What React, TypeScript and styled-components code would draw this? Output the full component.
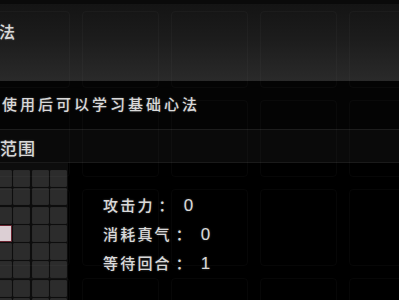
import React from "react";
import styled, { createGlobalStyle } from "styled-components";

const Global = createGlobalStyle`
  html, body { margin: 0; padding: 0; background: #000; }
  #root { width: 399px; height: 300px; }
`;

const Screen = styled.div`
  position: relative;
  width: 399px;
  height: 300px;
  overflow: hidden;
  background: #000;
  font-family: "Noto Sans CJK SC", "Noto Sans", sans-serif;
  color: #d9d9d9;
`;

const SlotLayer = styled.div`
  position: absolute;
  left: -7px;
  top: 11px;
  display: grid;
  grid-template-columns: repeat(5, 77px);
  grid-auto-rows: 77px;
  column-gap: 12px;
  row-gap: 12px;
  pointer-events: none;
  z-index: 2;
`;

const Slot = styled.div`
  border: 1px solid rgba(255, 255, 255, 0.028);
  border-radius: 4px;
  box-sizing: border-box;
`;

const Content = styled.div`
  position: relative;
  z-index: 1;
  display: flex;
  flex-direction: column;
`;

const TitleBar = styled.div`
  height: 81px;
  box-sizing: border-box;
  border-top: 4px solid #0a0a0a;
  background: linear-gradient(180deg, #141414 0%, #1c1c1c 45%, #2a2a2a 100%);
  display: flex;
  align-items: flex-start;
  padding-top: 16px;
`;

const Glow = styled.span`
  font-weight: 500;
  text-shadow: 0 0 2px rgba(255, 255, 255, 0.3);
`;

const Title = styled(Glow)`
  font-size: 16px;
  line-height: 22px;
  margin-left: -1px;
`;

const DescRow = styled.div`
  height: 49px;
  box-sizing: border-box;
  background: #040404;
  border-bottom: 1px solid #1d1d1d;
  display: flex;
  align-items: center;
  padding-left: 2px;
  padding-bottom: 3px;
`;

const Desc = styled(Glow)`
  font-size: 15px;
  letter-spacing: 3px;
`;

const SectionHeader = styled.div`
  height: 33px;
  box-sizing: border-box;
  background: #0a0a0a;
  border-bottom: 1px solid #1a1a1a;
  display: flex;
  align-items: center;
  padding-top: 3px;
`;

const SectionTitle = styled(Glow)`
  font-size: 17px;
  letter-spacing: 1px;
`;

const Body = styled.div`
  display: flex;
  align-items: flex-start;
  height: 140px;
`;

const RangePanel = styled.div`
  width: 68px;
  height: 140px;
  background: #0d0d0d;
  overflow: hidden;
  padding-top: 7px;
  box-sizing: border-box;
`;

const RangeGrid = styled.div`
  margin-left: -5px;
  display: grid;
  grid-template-columns: repeat(4, 17px);
  grid-auto-rows: 17px;
  gap: 1.3px;
`;

const Cell = styled.div<{ $on?: boolean }>`
  box-sizing: border-box;
  background: ${(p) => (p.$on ? "#dccfd4" : "#2c2c2c")};
  border: 1px solid ${(p) => (p.$on ? "#6a2430" : "#2a2a2a")};
  border-radius: 1px;
`;

const Stats = styled.div`
  margin-left: 35px;
  padding-top: 31px;
  display: flex;
  flex-direction: column;
  gap: 9px;
`;

const StatRow = styled.div`
  display: flex;
  align-items: baseline;
  height: 20px;
`;

const StatLabel = styled(Glow)`
  font-size: 15px;
  letter-spacing: 2.2px;
`;

const Colon = styled(Glow)`
  font-size: 15px;
  margin: 0 10px 0 4px;
`;

const StatValue = styled(Glow)`
  font-family: "Liberation Sans", Arial, sans-serif;
  font-weight: 400;
  font-size: 17px;
`;

const stats = [
  { label: "攻击力", value: "0" },
  { label: "消耗真气", value: "0" },
  { label: "等待回合", value: "1" },
];

export default function App() {
  const cells = Array.from({ length: 32 }, (_, i) => i);
  return (
    <Screen>
      <Global />
      <Content>
        <TitleBar>
          <Title>法</Title>
        </TitleBar>
        <DescRow>
          <Desc>使用后可以学习基础心法</Desc>
        </DescRow>
        <SectionHeader>
          <SectionTitle>范围</SectionTitle>
        </SectionHeader>
        <Body>
          <RangePanel>
            <RangeGrid>
              {cells.map((i) => (
                <Cell key={i} $on={i === 12} />
              ))}
            </RangeGrid>
          </RangePanel>
          <Stats>
            {stats.map((s) => (
              <StatRow key={s.label}>
                <StatLabel>{s.label}</StatLabel>
                <Colon>：</Colon>
                <StatValue>{s.value}</StatValue>
              </StatRow>
            ))}
          </Stats>
        </Body>
      </Content>
      <SlotLayer>
        {Array.from({ length: 20 }, (_, i) => (
          <Slot key={i} />
        ))}
      </SlotLayer>
    </Screen>
  );
}
